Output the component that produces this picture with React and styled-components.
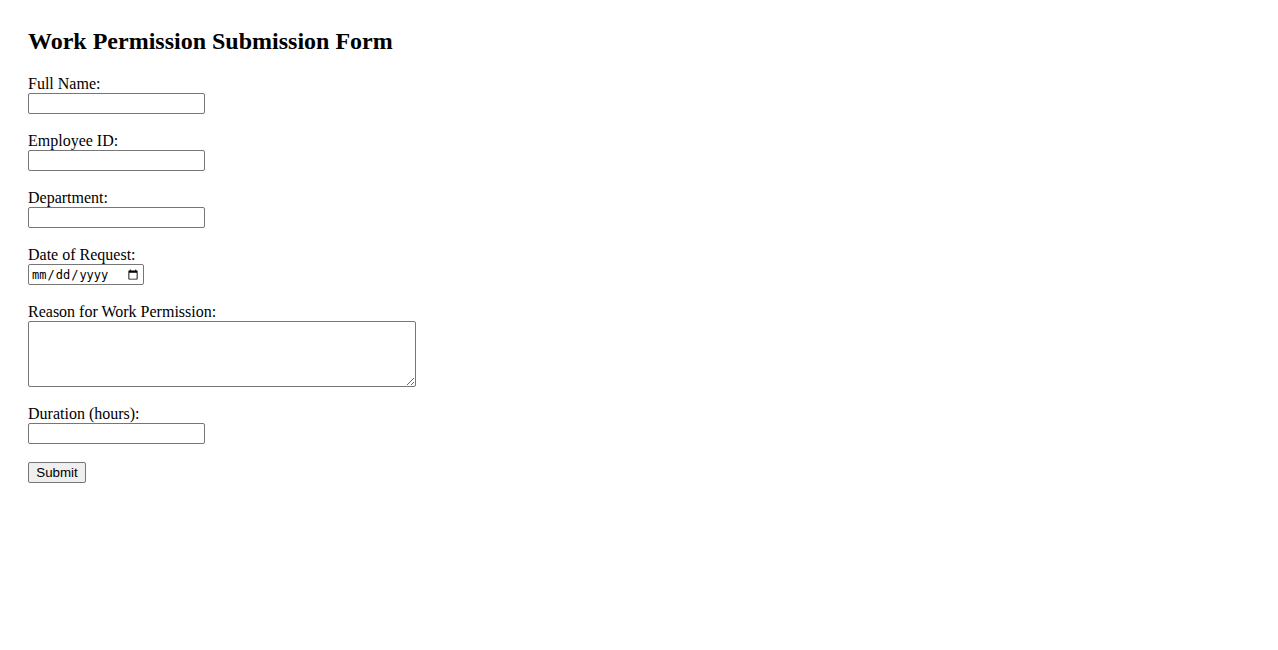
import React from 'react'
import styled, { createGlobalStyle } from 'styled-components'

const GlobalStyle = createGlobalStyle`
    body {
        margin: 8px;
        background: #ffffff;
        color: #000000;
        font-family: "Liberation Serif", "Times New Roman", serif;
    }
`

const Page = styled.div`
    padding: 20px;
`

const Title = styled.h2`
    margin: 0 0 20px 0;
    font-size: 24px;
    line-height: 27px;
    font-weight: 700;
`

const Form = styled.form`
    display: flex;
    flex-direction: column;
    align-items: flex-start;
`

const Field = styled.div`
    display: flex;
    flex-direction: column;
    align-items: flex-start;
    margin-bottom: 18px;
`

const Label = styled.label`
    font-size: 16px;
    line-height: 18px;
    height: 18px;
`

const Input = styled.input`
    box-sizing: border-box;
    width: ${(p) => p.$width || '177px'};
    height: 21px;
    margin: 0;
    padding: 1px 2px;
    border: 1px solid #767676;
    border-radius: 2px;
    font-family: ${(p) => (p.type === 'date' ? '"DejaVu Sans Mono", monospace' : '"Liberation Sans", Arial, sans-serif')};
    font-size: ${(p) => (p.type === 'date' ? '12px' : '13.33px')};
    background: #ffffff;
`

const TextArea = styled.textarea`
    box-sizing: border-box;
    width: 388px;
    height: 66px;
    margin: 0;
    padding: 2px;
    border: 1px solid #767676;
    border-radius: 2px;
    font-family: "Liberation Mono", monospace;
    font-size: 13.33px;
`

const Button = styled.button`
    box-sizing: border-box;
    width: 58px;
    height: 21px;
    padding: 1px 6px;
    border: 1px solid #767676;
    border-radius: 2px;
    background: #efefef;
    font-family: "Liberation Sans", Arial, sans-serif;
    font-size: 13.33px;
    color: #000000;
    line-height: 16px;
`

export default function App() {
    return (
        <Page>
            <GlobalStyle />
            <Title>Work Permission Submission Form</Title>
            <Form onSubmit={(e) => e.preventDefault()}>
                <Field>
                    <Label htmlFor="name">Full Name:</Label>
                    <Input id="name" type="text" />
                </Field>
                <Field>
                    <Label htmlFor="empid">Employee ID:</Label>
                    <Input id="empid" type="text" />
                </Field>
                <Field>
                    <Label htmlFor="dept">Department:</Label>
                    <Input id="dept" type="text" />
                </Field>
                <Field>
                    <Label htmlFor="date">Date of Request:</Label>
                    <Input id="date" type="date" $width="116px" />
                </Field>
                <Field>
                    <Label htmlFor="reason">Reason for Work Permission:</Label>
                    <TextArea id="reason" />
                </Field>
                <Field>
                    <Label htmlFor="hours">Duration (hours):</Label>
                    <Input id="hours" type="number" />
                </Field>
                <Button type="submit">Submit</Button>
            </Form>
        </Page>
    )
}
